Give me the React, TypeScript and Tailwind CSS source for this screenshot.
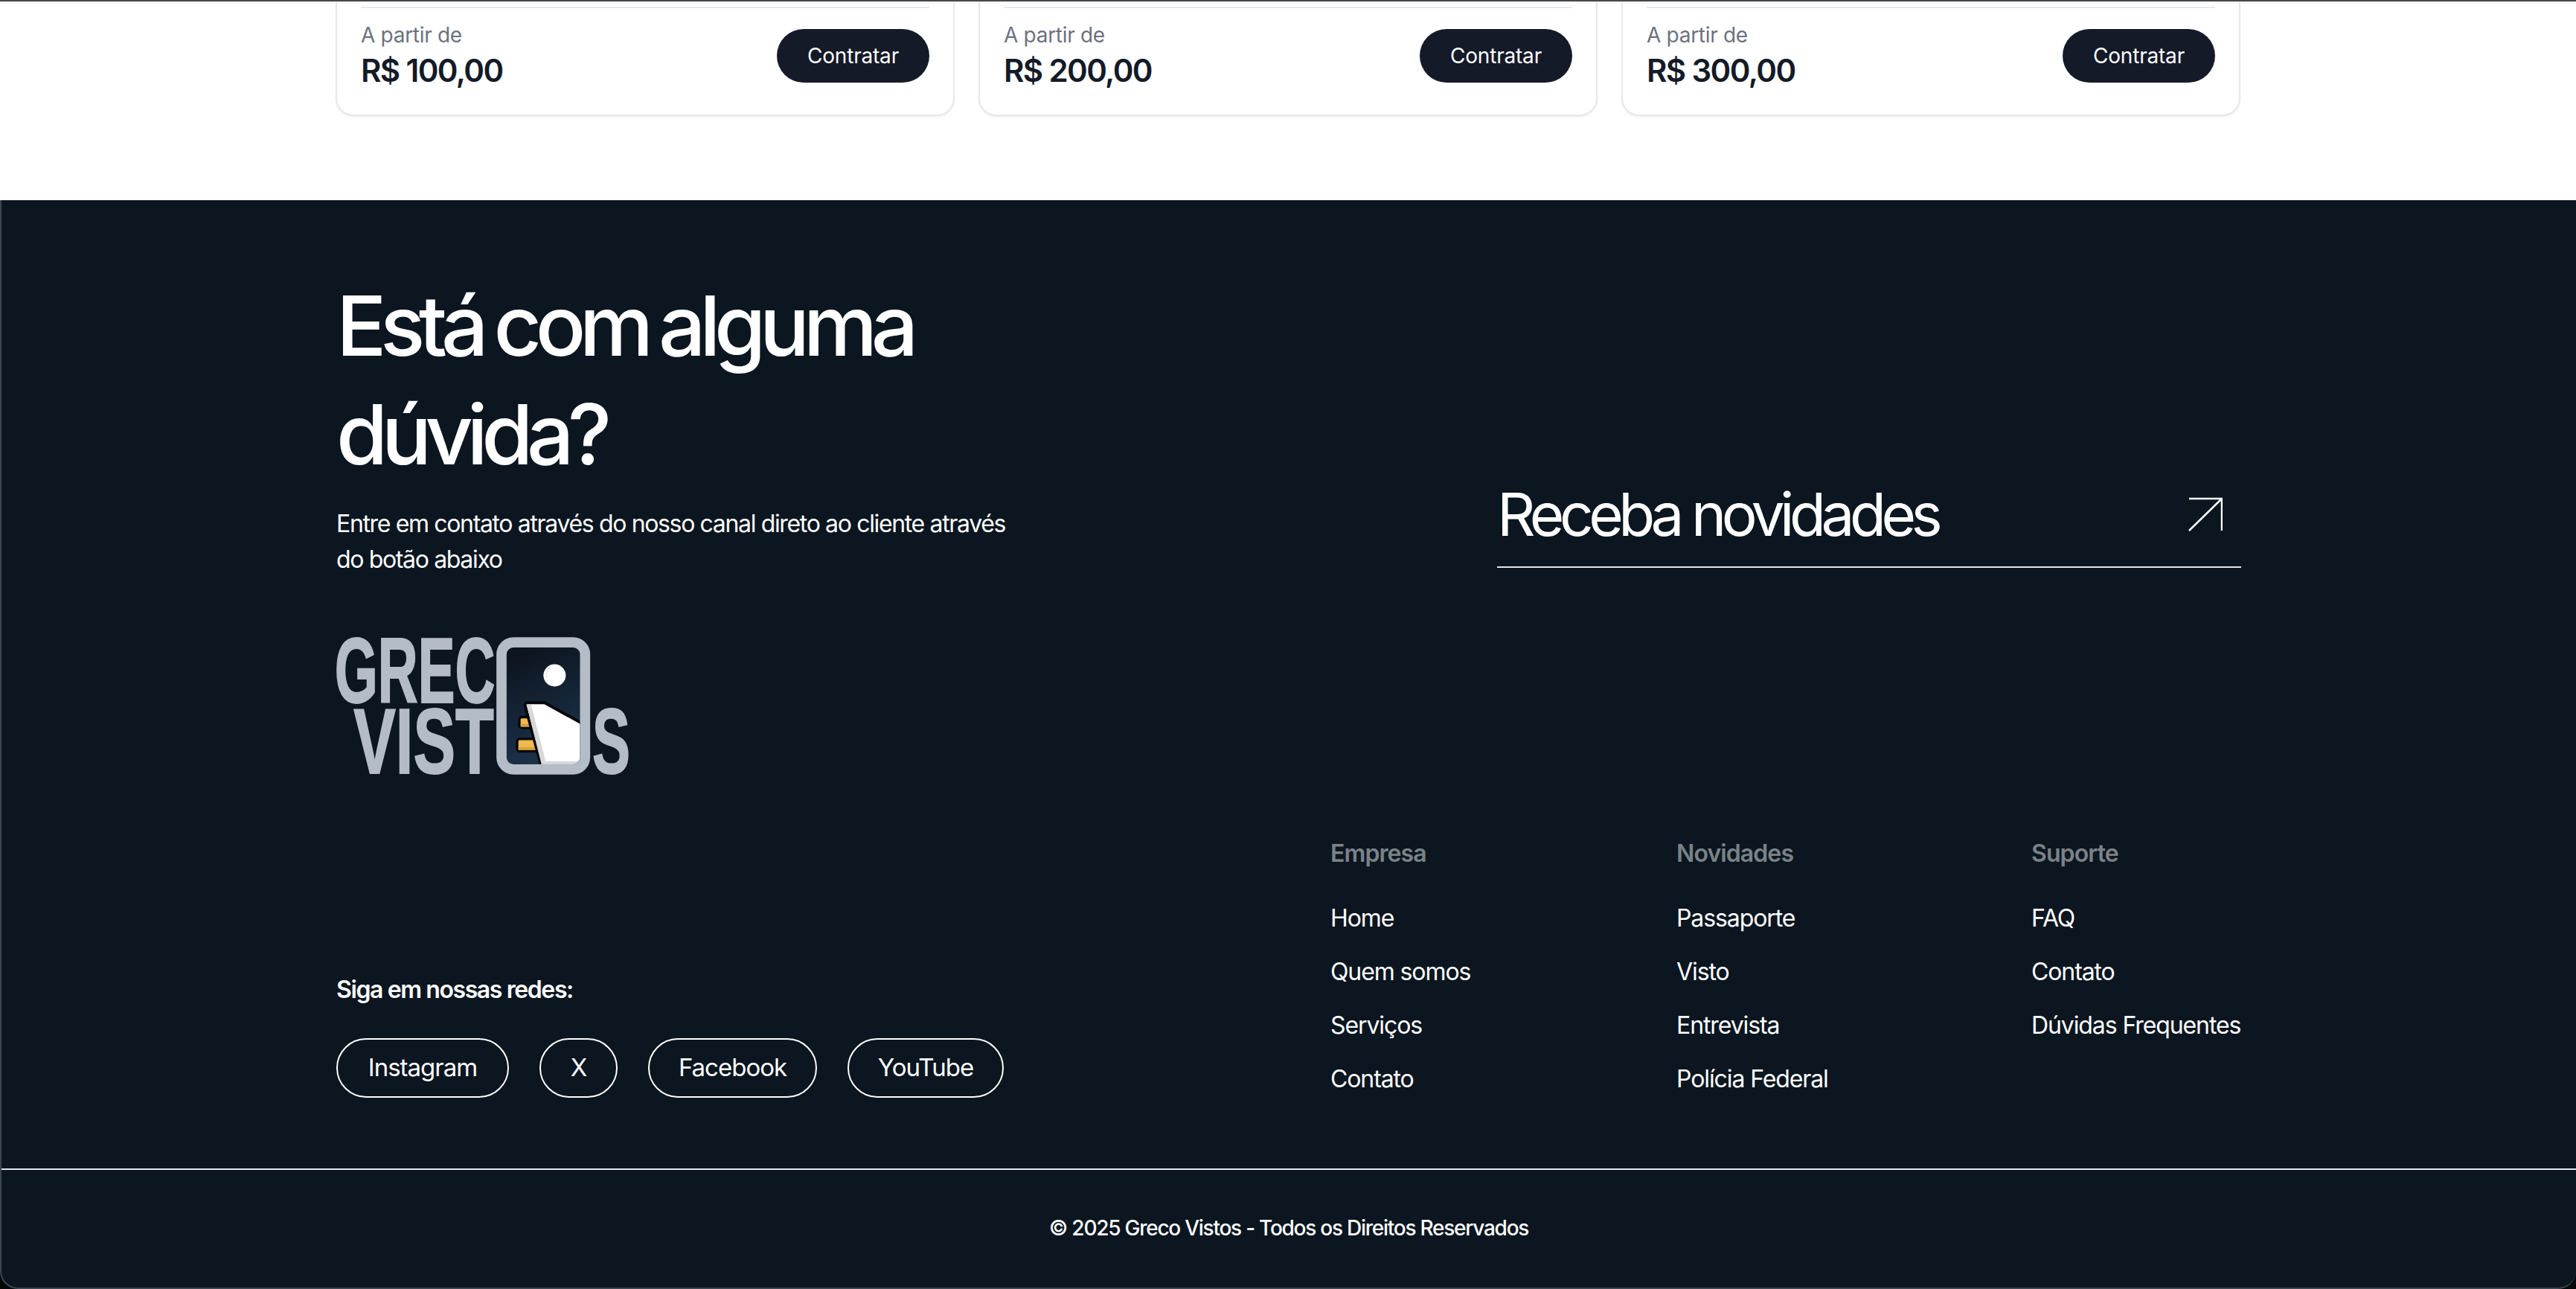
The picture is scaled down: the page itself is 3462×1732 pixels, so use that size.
const prices = ["R$ 100,00", "R$ 200,00", "R$ 300,00"];

const socials = [
  { label: "Instagram", width: "w-[232px]" },
  { label: "X", width: "w-[105px]" },
  { label: "Facebook", width: "w-[227px]" },
  { label: "YouTube", width: "w-[210px]" },
];

const linkColumns = [
  { title: "Empresa", links: ["Home", "Quem somos", "Serviços", "Contato"] },
  { title: "Novidades", links: ["Passaporte", "Visto", "Entrevista", "Polícia Federal"] },
  { title: "Suporte", links: ["FAQ", "Contato", "Dúvidas Frequentes"] },
];

function PriceCard({ price }: { price: string }) {
  return (
    <div className="h-[154px] rounded-b-[24px] border-x-2 border-b-2 border-[#e7e8ec] bg-white px-[32px] pt-[7px] shadow-[0_2px_3px_rgba(0,0,0,0.05)]">
      <div className="h-[2px] bg-[#e5e7eb]" />
      <div className="mt-[20px] flex items-center justify-between">
        <div>
          <p className="text-[28px] leading-[32px] tracking-[-0.3px] text-[#6b7280]">A partir de</p>
          <p className="mt-[8px] text-[42px] leading-[48px] font-semibold tracking-[-1.6px] text-[#141a28]">{price}</p>
        </div>
        <button className="flex h-[72px] w-[205px] items-center justify-center rounded-full bg-[#141a28] text-[28px] tracking-[-0.2px] text-white">
          Contratar
        </button>
      </div>
    </div>
  );
}

function Logo() {
  return (
    <svg viewBox="65 78 1185 557" className="h-[186px] w-[395px] overflow-visible">
      <defs>
        <linearGradient id="doc" x1="0.2" y1="0" x2="0.5" y2="1">
          <stop offset="0" stopColor="#0b121b" />
          <stop offset="1" stopColor="#1d344d" />
        </linearGradient>
        <clipPath id="inner">
          <rect x="752" y="120" width="295" height="470" rx="28" />
        </clipPath>
      </defs>
      <g fill="#b4bcc7" fontFamily="'Liberation Sans', sans-serif" fontWeight="700" stroke="#b4bcc7" strokeWidth="6" fontSize="372">
        <text x="58" y="342" textLength="647" lengthAdjust="spacingAndGlyphs">GREC</text>
        <text x="135" y="628" textLength="565" lengthAdjust="spacingAndGlyphs">VIST</text>
        <text x="1097" y="628" textLength="153" lengthAdjust="spacingAndGlyphs">S</text>
      </g>
      <rect x="731" y="99" width="337" height="512" rx="48" fill="url(#doc)" stroke="#b4bcc7" strokeWidth="41" />
      <circle cx="945" cy="232" r="45" fill="#fff" />
      <path d="M932 197a42 42 0 0 0 0 70a45 45 0 0 1 -6 -70z" fill="#d8d8d8" />
      <g clipPath="url(#inner)">
        <rect x="803" y="400" width="60" height="44" rx="10" fill="#f0b94f" stroke="#05070a" strokeWidth="10" />
        <rect x="808" y="428" width="50" height="11" fill="#d6a03f" />
        <rect x="794" y="488" width="100" height="50" rx="10" fill="#f0b94f" stroke="#05070a" strokeWidth="10" />
        <rect x="799" y="522" width="90" height="11" fill="#d6a03f" />
        <path d="M826 352Q824 342 838 342H905L1060 428V600H892Z" fill="#fff" stroke="#05070a" strokeWidth="12" strokeDasharray="330 8 30 8 500" />
        <path d="M832 350H850L912 590H892Z" fill="#d8d8d8" />
        <rect x="892" y="578" width="160" height="14" fill="#d8d8d8" />
      </g>
    </svg>
  );
}

function ArrowIcon() {
  return (
    <svg viewBox="0 0 46 46" fill="none" stroke="#fff" strokeWidth="2.5" className="h-[46px] w-[46px]">
      <path d="M1 2H45V45M45 2L1 45" />
    </svg>
  );
}

export default function App() {
  return (
    <div className="h-[1732px] w-[3462px] overflow-hidden bg-[#050708] font-['Inter',sans-serif]">
      <div className="h-[269px] border-t-2 border-[#444649] bg-white">
        <div className="mx-auto grid w-[2560px] grid-cols-3 gap-[32px]">
          {prices.map((price) => (
            <PriceCard key={price} price={price} />
          ))}
        </div>
      </div>

      <footer className="h-[1463px] rounded-b-[24px] border-b-2 border-l-2 border-[#3b4650] bg-[#0b1620] text-white">
        <div className="mx-auto w-[2560px] pt-[95px]">
          <div className="flex items-center justify-between">
            <div>
              <h2 className="w-[900px] text-[112px] leading-[146px] font-medium tracking-[-8.5px] [word-spacing:-6px]">
                Está com alguma dúvida?
              </h2>
              <p className="mt-[24px] w-[930px] text-[32px] leading-[48px] tracking-[-1.35px]">
                Entre em contato através do nosso canal direto ao cliente através do botão abaixo
              </p>
              <div className="mt-[80px]">
                <Logo />
              </div>
            </div>
            <a className="flex w-[1000px] items-center justify-between border-b-2 border-[#e5e7eb] pr-[25px] pb-[22px]">
              <span className="text-[80px] leading-[96px] tracking-[-6.5px]">Receba novidades</span>
              <ArrowIcon />
            </a>
          </div>

          <div className="mt-[81px] flex items-end justify-between">
            <div className="-mb-[5px]">
              <p className="text-[32px] leading-[40px] font-semibold tracking-[-1.4px]">Siga em nossas redes:</p>
              <div className="mt-[45px] flex gap-[41px]">
                {socials.map((social) => (
                  <a
                    key={social.label}
                    className={`flex h-[80px] items-center justify-center rounded-full border-2 border-white text-[33px] tracking-[-1px] ${social.width}`}
                  >
                    {social.label}
                  </a>
                ))}
              </div>
            </div>
            <div className="grid w-[1224px] grid-cols-[465px_477px_282px]">
              {linkColumns.map((column) => (
                <div key={column.title}>
                  <p className="text-[32px] leading-[48px] font-semibold tracking-[-0.9px] text-[#7b8287]">{column.title}</p>
                  <ul className="mt-[43px] flex flex-col gap-[32px]">
                    {column.links.map((link) => (
                      <li key={link} className="text-[32px] leading-[40px] tracking-[-1.1px] whitespace-nowrap">
                        {link}
                      </li>
                    ))}
                  </ul>
                </div>
              ))}
            </div>
          </div>
        </div>

        <div className="mt-[100px] border-t-2 border-[#e5e7eb] pt-[60px] text-center text-[28px] leading-[36px] font-medium tracking-[-1.25px]">
          © 2025 Greco Vistos - Todos os Direitos Reservados
        </div>
      </footer>
    </div>
  );
}
